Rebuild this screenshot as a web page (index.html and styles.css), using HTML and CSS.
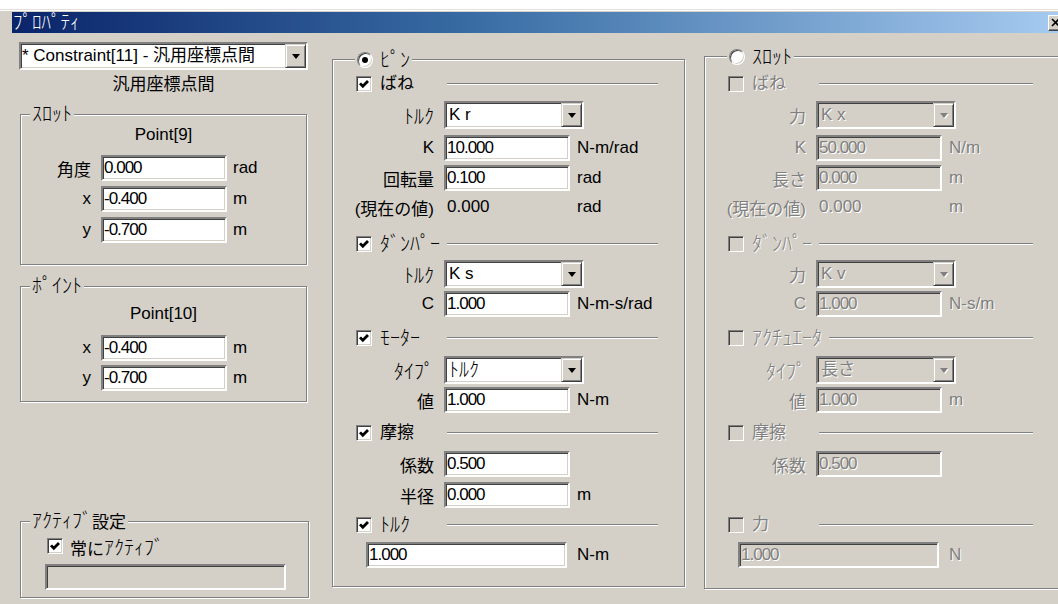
FILE: index.html
```html
<!DOCTYPE html>
<html lang="ja">
<head>
<meta charset="utf-8">
<title>ﾌﾟﾛﾊﾟﾃｨ</title>
<link rel="stylesheet" href="styles.css">
</head>
<body>
<div class="window">
  <div class="titlebar">
    <span class="title hw">ﾌﾟﾛﾊﾟﾃｨ</span>
    <span class="close"><svg viewBox="0 0 10 9" width="10" height="9"><path d="M1 1 L8 8 M8 1 L1 8" stroke="#000" stroke-width="1.6" fill="none"/></svg></span>
  </div>

  <div class="client">
    <!-- constraint selector and the two end points -->
    <div class="col-left">
      <div class="combo combo-main sunken">
        <span class="ctext">* Constraint[11] - 汎用座標点間</span>
        <span class="dbtn"><i></i></span>
      </div>
      <div class="caption">汎用座標点間</div>

      <div class="group g-slot">
        <div class="legend hw">ｽﾛｯﾄ</div>
        <div class="point pt-slot">Point[9]</div>
        <div class="lfield first"><span class="lbl">角度</span><span class="input sunken">0.000</span><span class="unit">rad</span></div>
        <div class="lfield"><span class="lbl">x</span><span class="input sunken">-0.400</span><span class="unit">m</span></div>
        <div class="lfield"><span class="lbl">y</span><span class="input sunken">-0.700</span><span class="unit">m</span></div>
      </div>

      <div class="group g-point">
        <div class="legend hw">ﾎﾟｲﾝﾄ</div>
        <div class="point pt-point">Point[10]</div>
        <div class="lfield first2"><span class="lbl">x</span><span class="input sunken">-0.400</span><span class="unit">m</span></div>
        <div class="lfield tight"><span class="lbl">y</span><span class="input sunken">-0.700</span><span class="unit">m</span></div>
      </div>

      <div class="group g-active">
        <div class="legend"><span class="hw">ｱｸﾃｨﾌﾞ</span>設定</div>
        <div class="arow">
          <span class="chk"><svg viewBox="0 0 12 12"><path d="M2 5.4 L4.8 8.3 L10 3" stroke="#000" stroke-width="2.8" fill="none"/></svg></span>
          <span class="alabel">常に<span class="hw">ｱｸﾃｨﾌﾞ</span></span>
        </div>
        <div class="abox sunken"></div>
      </div>
    </div>

    <!-- pin joint -->
    <div class="group joint g-pin">
      <div class="legend jlegend"><span class="radio on"></span><span class="rlabel hw">ﾋﾟﾝ</span></div>

      <div class="head"><span class="chk"><svg viewBox="0 0 12 12"><path d="M2 5.4 L4.8 8.3 L10 3" stroke="#000" stroke-width="2.8" fill="none"/></svg></span><span class="hlabel">ばね</span><span class="sep"></span></div>
      <div class="field mt9"><span class="lbl hw">ﾄﾙｸ</span><span class="combo sunken"><span class="ctext">K r</span><span class="dbtn"><i></i></span></span></div>
      <div class="field mt7"><span class="lbl">K</span><span class="input sunken">10.000</span><span class="unit">N-m/rad</span></div>
      <div class="field mt4"><span class="lbl">回転量</span><span class="input sunken">0.100</span><span class="unit">rad</span></div>
      <div class="field mt4 readout"><span class="lbl">(現在の値)</span><span class="value">0.000</span><span class="unit">rad</span></div>

      <div class="head mt16"><span class="chk"><svg viewBox="0 0 12 12"><path d="M2 5.4 L4.8 8.3 L10 3" stroke="#000" stroke-width="2.8" fill="none"/></svg></span><span class="hlabel hw">ﾀﾞﾝﾊﾟｰ</span><span class="sep"></span></div>
      <div class="field mt8"><span class="lbl hw">ﾄﾙｸ</span><span class="combo sunken"><span class="ctext">K s</span><span class="dbtn"><i></i></span></span></div>
      <div class="field mt4"><span class="lbl">C</span><span class="input sunken">1.000</span><span class="unit">N-m-s/rad</span></div>

      <div class="head mt12"><span class="chk"><svg viewBox="0 0 12 12"><path d="M2 5.4 L4.8 8.3 L10 3" stroke="#000" stroke-width="2.8" fill="none"/></svg></span><span class="hlabel hw">ﾓｰﾀｰ</span><span class="sep"></span></div>
      <div class="field mt10"><span class="lbl hw">ﾀｲﾌﾟ</span><span class="combo sunken"><span class="ctext hw">ﾄﾙｸ</span><span class="dbtn"><i></i></span></span></div>
      <div class="field mt4"><span class="lbl">値</span><span class="input sunken">1.000</span><span class="unit">N-m</span></div>

      <div class="head mt11"><span class="chk"><svg viewBox="0 0 12 12"><path d="M2 5.4 L4.8 8.3 L10 3" stroke="#000" stroke-width="2.8" fill="none"/></svg></span><span class="hlabel">摩擦</span><span class="sep"></span></div>
      <div class="field mt9"><span class="lbl">係数</span><span class="input sunken">0.500</span></div>
      <div class="field mt5"><span class="lbl">半径</span><span class="input sunken">0.000</span><span class="unit">m</span></div>

      <div class="head mt8"><span class="chk"><svg viewBox="0 0 12 12"><path d="M2 5.4 L4.8 8.3 L10 3" stroke="#000" stroke-width="2.8" fill="none"/></svg></span><span class="hlabel hw">ﾄﾙｸ</span><span class="sep"></span></div>
      <div class="field mt8 full"><span class="input sunken">1.000</span><span class="unit">N-m</span></div>
    </div>

    <!-- slot joint (inactive) -->
    <div class="group joint g-slotj dis">
      <div class="legend jlegend"><span class="radio"></span><span class="rlabel hw">ｽﾛｯﾄ</span></div>

      <div class="head"><span class="chk"></span><span class="hlabel">ばね</span><span class="sep"></span></div>
      <div class="field mt9"><span class="lbl">力</span><span class="combo sunken"><span class="ctext">K x</span><span class="dbtn"><i></i></span></span></div>
      <div class="field mt7"><span class="lbl">K</span><span class="input sunken">50.000</span><span class="unit">N/m</span></div>
      <div class="field mt4"><span class="lbl">長さ</span><span class="input sunken">0.000</span><span class="unit">m</span></div>
      <div class="field mt4 readout"><span class="lbl">(現在の値)</span><span class="value">0.000</span><span class="unit">m</span></div>

      <div class="head mt16"><span class="chk"></span><span class="hlabel hw">ﾀﾞﾝﾊﾟｰ</span><span class="sep"></span></div>
      <div class="field mt8"><span class="lbl">力</span><span class="combo sunken"><span class="ctext">K v</span><span class="dbtn"><i></i></span></span></div>
      <div class="field mt4"><span class="lbl">C</span><span class="input sunken">1.000</span><span class="unit">N-s/m</span></div>

      <div class="head mt12"><span class="chk"></span><span class="hlabel hw">ｱｸﾁｭｴｰﾀ</span><span class="sep"></span></div>
      <div class="field mt10"><span class="lbl hw">ﾀｲﾌﾟ</span><span class="combo sunken"><span class="ctext">長さ</span><span class="dbtn"><i></i></span></span></div>
      <div class="field mt4"><span class="lbl">値</span><span class="input sunken">1.000</span><span class="unit">m</span></div>

      <div class="head mt11"><span class="chk"></span><span class="hlabel">摩擦</span><span class="sep"></span></div>
      <div class="field mt9"><span class="lbl">係数</span><span class="input sunken">0.500</span></div>
      <div class="field mt5"></div>

      <div class="head mt8"><span class="chk"></span><span class="hlabel">力</span><span class="sep"></span></div>
      <div class="field mt8 full"><span class="input sunken">1.000</span><span class="unit">N</span></div>
    </div>
  </div>
</div>
</body>
</html>
```

FILE: styles.css
```css
* { box-sizing: border-box; }

html, body {
  margin: 0;
  padding: 0;
}

body {
  width: 1058px;
  height: 604px;
  overflow: hidden;
  background: #fff;
  font-family: "Liberation Sans", "Noto Sans CJK JP", sans-serif;
  font-size: 17px;
  color: #000;
}

/* half-width katakana are drawn a size up so they read at label height */
.hw {
  font-size: 20px;
  font-weight: 300;
  letter-spacing: 0;
}

/* ---------- window frame ---------- */
.window {
  margin-top: 9px;
  height: 595px;
  background: #d4d0c8;
  border-top: 1px solid #e4e1dc;
  box-shadow: inset 0 1px 0 #fff;
  padding-top: 2px;
  overflow: hidden;
}

.titlebar {
  margin-left: 12px;
  height: 21px;
  background: linear-gradient(to right, #0a246a 0%, #3a6ea5 45%, #a6caf0 100%);
  display: flex;
  align-items: center;
  justify-content: space-between;
  padding-left: 1px;
}

.title {
  color: #fff;
  font-size: 19px;
  line-height: 21px;
}

.close {
  width: 20px;
  height: 16px;
  margin-right: -10px;
  background: #d4d0c8;
  border: 1px solid;
  border-color: #fff #404040 #404040 #fff;
  box-shadow: inset -1px -1px 0 #808080;
  display: flex;
  align-items: center;
  justify-content: flex-start;
  padding-left: 2px;
}

.close svg { display: block; }

/* ---------- client area ---------- */
.client {
  display: flex;
  align-items: flex-start;
  padding: 9px 0 0 19px;
}

.col-left {
  width: 289px;
  flex: none;
  display: flex;
  flex-direction: column;
}

/* ---------- 3D borders ---------- */
.sunken {
  border: 2px solid;
  border-color: #808080 #fff #fff #808080;
  box-shadow: inset 1px 1px 0 #404040, inset -1px -1px 0 #d4d0c8;
}

.group {
  position: relative;
  border: 1px solid #808080;
  box-shadow: inset 1px 1px 0 #fff, 1px 1px 0 #fff;
}

.legend {
  position: absolute;
  top: -12px;
  left: 9px;
  padding: 0 2px;
  background: #d4d0c8;
  line-height: 22px;
  white-space: nowrap;
}

/* ---------- text fields ---------- */
.input {
  width: 126px;
  height: 26px;
  flex: none;
  background: #fff;
  padding-left: 1px;
  line-height: 22px;
  letter-spacing: -1px;
  white-space: nowrap;
  overflow: hidden;
}

.unit {
  margin-left: 7px;
  white-space: nowrap;
}

/* ---------- combo boxes ---------- */
.combo {
  width: 140px;
  height: 28px;
  flex: none;
  background: #fff;
  display: flex;
  align-items: center;
  justify-content: space-between;
  overflow: hidden;
}

.ctext {
  padding-left: 3px;
  line-height: 24px;
  white-space: nowrap;
}

.dbtn {
  width: 21px;
  height: 24px;
  flex: none;
  background: #d4d0c8;
  border: 1px solid;
  border-color: #d4d0c8 #404040 #404040 #d4d0c8;
  box-shadow: inset 1px 1px 0 #fff, inset -1px -1px 0 #808080;
  display: flex;
  align-items: center;
  justify-content: center;
}

.dbtn i {
  display: block;
  width: 0;
  height: 0;
  border-style: solid;
  border-width: 5px 4.5px 0 4.5px;
  border-color: #000 transparent transparent transparent;
  margin-top: 1px;
}

/* ---------- check boxes & radio buttons ---------- */
.chk {
  width: 16px;
  height: 16px;
  flex: none;
  background: #fff;
  border: 1px solid;
  border-color: #808080 #fff #fff #808080;
  box-shadow: inset 1px 1px 0 #404040, inset -1px -1px 0 #d4d0c8;
  padding: 1px;
  display: block;
}

.chk svg {
  display: block;
  width: 12px;
  height: 12px;
}

.radio {
  position: relative;
  width: 16px;
  height: 16px;
  flex: none;
  border-radius: 50%;
  background: #fff;
  border: 1px solid;
  border-color: #808080 #fff #fff #808080;
  box-shadow: inset 1px 1px 0 #404040, inset -1px -1px 0 #d4d0c8;
}

.radio.on::after {
  content: "";
  position: absolute;
  left: 4px;
  top: 4px;
  width: 6px;
  height: 6px;
  border-radius: 50%;
  background: #000;
}

/* ---------- left column ---------- */
.combo-main {
  width: 289px;
  height: 28px;
}

.combo-main .ctext { padding-left: 1px; }

.caption {
  margin-top: 3px;
  text-align: center;
  line-height: 24px;
}

.g-slot {
  margin-top: 17px;
  margin-left: 1px;
  width: 287px;
  height: 151px;
}

.g-point {
  margin-top: 21px;
  margin-left: 1px;
  width: 287px;
  height: 116px;
}

.g-active {
  margin-top: 119px;
  margin-left: 1px;
  width: 289px;
  height: 77px;
}

.point {
  text-align: center;
  line-height: 20px;
}

.pt-slot { margin-top: 10px; }
.pt-point { margin-top: 17px; }

.lfield {
  display: flex;
  align-items: center;
  height: 26px;
  margin-top: 5px;
}

.lfield.first { margin-top: 10px; }
.lfield.first2 { margin-top: 11px; }
.lfield.tight { margin-top: 4px; }

.lfield .lbl {
  width: 70px;
  margin-right: 10px;
  text-align: right;
}

.lfield .unit { margin-left: 6px; }

.arow {
  display: flex;
  align-items: center;
  height: 18px;
  margin-top: 15px;
  padding-left: 26px;
}

.alabel { margin-left: 7px; }

.abox {
  margin-top: 9px;
  margin-left: 24px;
  width: 241px;
  height: 26px;
  background: #d4d0c8;
}

/* ---------- joint groups ---------- */
.joint { flex: none; }

.g-pin {
  margin-left: 24px;
  margin-top: 17px;
  width: 353px;
  height: 528px;
  padding-top: 15px;
}

.g-slotj {
  margin-left: 19px;
  margin-top: 14px;
  width: 356px;
  height: 533px;
  padding-top: 18px;
}

.jlegend {
  left: 22px;
  top: -11px;
  display: flex;
  align-items: center;
}

.rlabel { margin-left: 7px; }

.head {
  display: flex;
  align-items: center;
  height: 18px;
  padding-left: 23px;
  padding-right: 26px;
}

.hlabel {
  margin-left: 8px;
  min-width: 60px;
  white-space: nowrap;
  line-height: 18px;
}

.sep {
  flex: 1;
  margin-left: 7px;
  height: 2px;
  border-top: 1px solid #808080;
  border-bottom: 1px solid #fff;
}

.field {
  display: flex;
  align-items: center;
  height: 26px;
}

.field .lbl {
  width: 101px;
  margin-right: 10px;
  text-align: right;
  white-space: nowrap;
  flex: none;
}

.readout { height: 24px; }

.readout .value {
  width: 126px;
  padding-left: 3px;
  flex: none;
}

.full { padding-left: 33px; }
.full .input { width: 201px; }
.full .unit { margin-left: 10px; }

.mt4 { margin-top: 4px; }
.mt5 { margin-top: 5px; }
.mt7 { margin-top: 7px; }
.mt8 { margin-top: 8px; }
.mt9 { margin-top: 9px; }
.mt10 { margin-top: 10px; }
.mt11 { margin-top: 11px; }
.mt12 { margin-top: 12px; }
.mt16 { margin-top: 16px; }

/* ---------- inactive controls ---------- */
.dis .hlabel,
.dis .lbl,
.dis .unit,
.dis .value,
.dis .input,
.dis .ctext {
  color: #808080;
  text-shadow: 1px 1px 0 #fff;
}

.dis .input,
.dis .combo,
.dis .chk {
  background: #d4d0c8;
}

.dis .dbtn i {
  border-top-color: #808080;
  filter: drop-shadow(1px 1px 0 #fff);
}
```
